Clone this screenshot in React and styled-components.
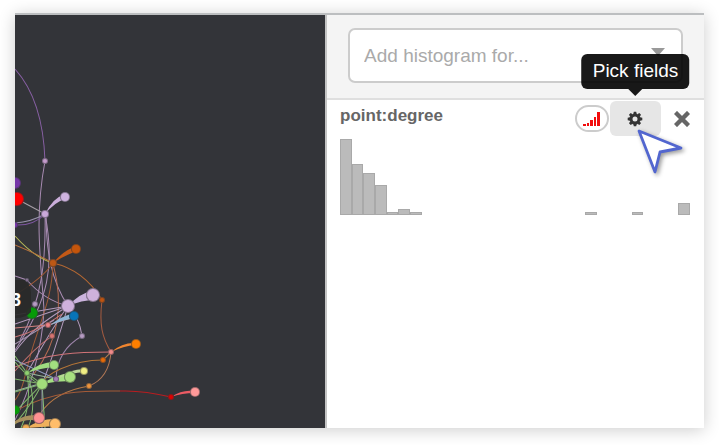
import React from "react";
import styled, { createGlobalStyle } from "styled-components";

const Global = createGlobalStyle`
  *, *::before, *::after { box-sizing: border-box; }
  body {
    margin: 0;
    background: #fff;
    font-family: "Liberation Sans", Arial, Helvetica, sans-serif;
  }
`;

const Page = styled.div`
  display: flex;
  min-height: 100vh;
  padding: 13px 15px 17px;
`;

const Frame = styled.main`
  flex: 1;
  display: grid;
  grid-template-columns: minmax(0, 45fr) minmax(0, 55fr);
  border-top: 2px solid #bcbec0;
  background: #fff;
  box-shadow: 0 2px 16px rgba(0, 0, 0, 0.2);
`;

const GraphPane = styled.section`
  display: flex;
  background: #333439;
`;

const GraphCanvas = styled.svg`
  display: block;
  flex: 1;
  min-width: 0;
  height: calc(100vh - 32px);
`;

const Sidebar = styled.aside`
  border-left: 2px solid #c4c4c4;
  background: #fff;
`;

const PickerBar = styled.header`
  padding: 13px 21px 15px;
  background: #f4f4f4;
  border-bottom: 2px solid #dfdfdf;
`;

const PickerField = styled.div`
  display: grid;
  align-items: center;
`;

const Picker = styled.select`
  grid-area: 1 / 1;
  appearance: none;
  width: 100%;
  height: 55px;
  padding: 0 44px 0 14px;
  border: 2px solid #ccc;
  border-radius: 7px;
  background: #fff;
  color: #aaa;
  font: 19px "Liberation Sans", Arial, sans-serif;
`;

const PickerArrow = styled.span`
  grid-area: 1 / 1;
  justify-self: end;
  margin: 0 18px 8px 0;
  border: 7px solid transparent;
  border-top: 8px solid #999;
  border-bottom: 0;
  pointer-events: none;
`;

const Histogram = styled.article`
  padding: 1px 0 0 13px;
`;

const TitleRow = styled.div`
  display: flex;
  align-items: center;
  height: 35px;
`;

const Title = styled.h2`
  flex: 1;
  margin: 0;
  padding-bottom: 6px;
  color: #666;
  font-size: 17px;
  line-height: 20px;
`;

const IconButton = styled.button`
  position: relative;
  display: flex;
  align-items: center;
  justify-content: center;
  width: ${(p) => p.$width}px;
  height: 35px;
  padding: 0;
  border: 0;
  border-radius: 6px;
  background: ${(p) => (p.$active ? "#e6e6e6" : "transparent")};
  color: #333;
`;

const EncodeButton = styled(IconButton)`
  height: 27px;
  margin-right: 1px;
  border: 2px solid #ccc;
  border-radius: 14px;
  background: #fff;
`;

const Tooltip = styled.span`
  position: absolute;
  bottom: calc(100% + 12px);
  left: 50%;
  transform: translateX(-50%);
  padding: 6px 11px 7px;
  border-radius: 6px;
  background: rgba(0, 0, 0, 0.9);
  color: #fff;
  font: 19px/22px "Liberation Sans", Arial, sans-serif;
  white-space: nowrap;

  &::after {
    content: "";
    position: absolute;
    top: 100%;
    left: 50%;
    margin-left: -7px;
    border: 7px solid transparent;
    border-top-color: rgba(0, 0, 0, 0.9);
    border-bottom: 0;
  }
`;

const Pointer = styled.svg`
  position: absolute;
  top: 24px;
  left: 24px;
  pointer-events: none;
  filter: drop-shadow(2px 2px 2px rgba(0, 0, 0, 0.4));
`;

const Bars = styled.div`
  display: grid;
  grid-template-columns: repeat(30, 1fr);
  align-items: end;
  height: 76px;
  margin: 3px 14px 0 0;
`;

const Bar = styled.span`
  height: ${(p) => p.$height}px;
  border: ${(p) => (p.$height ? 1 : 0)}px solid #a9a9a9;
  background: #bbb;
`;

const bins = Array.from({ length: 30 }, () => 0);
Object.assign(bins, { 0: 76, 1: 51, 2: 42, 3: 30, 4: 3, 5: 6, 6: 3, 21: 3, 25: 3, 29: 12 });

const edges = [
  ["#8860a4", "M15 69Q43 100 45 161"],
  ["#a98cb3", "M45 161C34 220 41 260 44 310C42 350 30 390 15 420"],
  ["#9a93ae", "M15 223Q31 222 45 214"],
  ["#7e57a0", "M15 225Q33 226 45 214"],
  ["#a7a0a7", "M17 199L45 214"],
  ["#a98cb3", "M45 214C46 260 42 300 20 340"],
  ["#a98cb3", "M45 214C55 265 49 300 15 350"],
  ["#a98cb3", "M46 214C46 250 51 280 68 306"],
  ["#a98cb3", "M15 276L27 280Q44 300 68 306"],
  ["#b7b957", "M15 236Q35 258 53 263"],
  ["#b7713d", "M15 245Q35 253 53 263"],
  ["#b56832", "M53 263Q84 270 102 300"],
  ["#9f5a36", "M53 263C45 275 28 287 15 295"],
  ["#9f5a36", "M53 263C52 293 45 310 35 340S24 390 15 400"],
  ["#b5694f", "M53 263C64 305 59 340 34 374"],
  ["#a45b40", "M102 300C99 325 102 337 111 352"],
  ["#b29abc", "M68 306L15 315"],
  ["#b29abc", "M68 306L15 324"],
  ["#b29abc", "M68 306C48 319 30 330 15 352"],
  ["#b29abc", "M68 306C54 325 40 350 27 373"],
  ["#b29abc", "M68 306C57 342 52 360 42 384"],
  ["#b29abc", "M68 306Q79 316 82 336"],
  ["#9d84aa", "M82 336Q57 350 56 379"],
  ["#d18080", "M15 328L48 325L74 317"],
  ["#ce7777", "M15 337Q40 330 62 314"],
  ["#c37070", "M52 336Q35 347 15 371"],
  ["#d07377", "M15 367C48 353 78 352 111 352"],
  ["#b17856", "M111 352Q109 378 89 386"],
  ["#b57637", "M103 360C70 360 44 375 42 384"],
  ["#b77946", "M89 386C64 390 49 400 40 414"],
  ["#a45b38", "M15 411C55 389 90 391 120 391"],
  ["#b91d20", "M120 391Q142 390 171 397"],
  ["#b57f54", "M103 360L111 352"],
  ["#80b66c", "M15 356L27 373L42 384L15 379"],
  ["#80b66c", "M15 362Q35 385 42 384"],
  ["#80b66c", "M15 392L42 384L15 412"],
  ["#80b66c", "M27 373Q32 404 21 428"],
  ["#80b66c", "M27 373Q38 404 28 428"],
  ["#8ac578", "M42 384L45 428"],
  ["#8e8fa4", "M42 384L42 428"],
  ["#98b69a", "M15 391L56 379L27 373"],
  ["#8f9bc0", "M15 360L56 379"],
  ["#80b66c", "M15 424Q32 404 42 384"],
  ["#a995b4", "M15 344L54 320"],
];

const wedges = [
  ["#cbaedb", "M45 214Q53 198 63 195L65 199Q55 202 45 214Z"],
  ["#c35917", "M53 263Q64 250 75 247L77 251Q63 256 53 263Z"],
  ["#cbb3dd", "M68 306Q80 293 92 291L94 300Q82 300 68 306Z"],
  ["#8fb6d6", "M50 325Q62 316 74 313L75 318Q64 320 50 325Z"],
  ["#9edb80", "M27 373Q40 362 54 362L54 367Q41 368 27 373Z"],
  ["#a5df83", "M42 384Q55 375 69 373L71 381Q56 381 42 384Z"],
  ["#bcd79a", "M56 379Q70 369 84 369L85 372Q70 373 56 379Z"],
  ["#f0852f", "M111 352Q123 342 136 343L136 345Q123 346 111 352Z"],
  ["#ec5b64", "M171 397Q183 389 194 391L195 393Q182 393 171 397Z"],
  ["#a8905e", "M15 421Q25 414 38 415L39 421Q27 418 15 424Z"],
  ["#f0b15c", "M26 428Q40 419 54 419L56 426Z"],
];

const nodes = [
  [45, 161, 2, "#c49bcc"], [15, 183, 5, "#7636a8"], [17, 199, 6, "#ff0000"],
  [45, 214, 3, "#c9a8d9"], [65, 197, 4, "#ceb3df"], [15, 225, 2, "#7636a8"],
  [53, 263, 3, "#bd5815"], [76, 249, 4, "#c5550b"], [27, 280, 1, "#8f7a9c"],
  [35, 304, 2, "#b69ac5"], [32, 313, 5, "#079b08"], [68, 306, 6, "#cfb1dc"],
  [93, 295, 6, "#cfb1dc"], [102, 300, 2, "#be5411"], [74, 316, 4, "#0874b8"],
  [48, 325, 2, "#ee8182"], [52, 336, 2, "#d77370"], [82, 336, 2, "#b59bc2"],
  [111, 352, 2, "#f18a8b"], [136, 344, 4, "#ff7f00"], [103, 360, 2, "#e76b08"],
  [54, 365, 4, "#a3df80"], [27, 373, 2, "#8fd16f"], [42, 384, 5, "#a2dd7b"],
  [56, 379, 2, "#a47db5"], [70, 377, 5, "#a8e080"], [84, 371, 3, "#f1ee83"],
  [89, 386, 2, "#ee943c"], [171, 397, 2, "#dd0000"], [195, 392, 4, "#ff9999"],
  [15, 410, 4, "#079b08"], [39, 418, 5, "#ff9292"], [55, 424, 5, "#ffbd6a"],
  [26, 428, 3, "#edac52"],
];

function Graph() {
  return (
    <GraphCanvas viewBox="15 15 310 413" preserveAspectRatio="xMinYMin slice" role="img" aria-label="Network graph">
      <g fill="none" strokeWidth="1">
        {edges.map(([color, d]) => <path key={d} d={d} stroke={color} />)}
      </g>
      {wedges.map(([color, d]) => <path key={d} d={d} fill={color} />)}
      {nodes.map(([x, y, r, color]) => (
        <g key={`${x}-${y}`} fill={color}>
          <circle cx={x} cy={y} r={r + 1} fill="#333439" />
          <circle cx={x} cy={y} r={r + 1} opacity=".55" />
          <circle cx={x} cy={y} r={r} />
        </g>
      ))}
      <path d="M15 280H24Q31 285 31 293V312Q26 318 15 318Z" fill="#292929" opacity=".92" />
      <text x="11" y="306" fill="#fff" fontSize="18" fontWeight="700">3</text>
    </GraphCanvas>
  );
}

function SignalIcon() {
  return (
    <svg width="18" height="16" viewBox="0 0 18 16" fill="#f20d0d" aria-hidden="true">
      <path d="M0 13h3v2H0zM4 12h2v3H4zM7 9h3v6H7zM11 6h2v9h-2zM14 1h3v14h-3z" />
    </svg>
  );
}

function CogIcon() {
  return (
    <svg width="16" height="16" viewBox="0 0 16 16" aria-hidden="true">
      <circle cx="8" cy="8" r="4" fill="none" stroke="#333" strokeWidth="3" />
      {[0, 45, 90, 135, 180, 225, 270, 315].map((angle) => (
        <path key={angle} d="M6.3 3L6.8 .7H9.2L9.7 3Z" fill="#333" transform={`rotate(${angle} 8 8)`} />
      ))}
    </svg>
  );
}

function CloseIcon() {
  return (
    <svg width="16" height="16" viewBox="0 0 16 16" aria-hidden="true">
      <path d="M3 3L13 13M13 3L3 13" stroke="#666" strokeWidth="4.4" strokeLinecap="square" />
    </svg>
  );
}

export default function App() {
  return (
    <>
      <Global />
      <Page>
        <Frame>
          <GraphPane><Graph /></GraphPane>
          <Sidebar>
            <PickerBar>
              <PickerField>
                <Picker aria-label="Add histogram" defaultValue="">
                  <option value="">Add histogram for...</option>
                  <option value="degree">point:degree</option>
                </Picker>
                <PickerArrow />
              </PickerField>
            </PickerBar>
            <Histogram>
              <TitleRow>
                <Title>point:degree</Title>
                <EncodeButton $width={34} aria-label="Color by field"><SignalIcon /></EncodeButton>
                <IconButton $width={51} $active aria-label="Pick fields">
                  <CogIcon />
                  <Tooltip role="tooltip">Pick fields</Tooltip>
                  <Pointer width="52" height="54" viewBox="0 0 52 54" aria-hidden="true">
                    <path
                      d="M5 6L47 23L26 27L21 47Z"
                      fill="#fff"
                      stroke="#5266cf"
                      strokeWidth="2.8"
                      strokeLinejoin="round"
                    />
                  </Pointer>
                </IconButton>
                <IconButton $width={43} aria-label="Remove histogram"><CloseIcon /></IconButton>
              </TitleRow>
              <Bars role="img" aria-label="Distribution of point:degree">
                {bins.map((height, i) => <Bar key={i} $height={height} />)}
              </Bars>
            </Histogram>
          </Sidebar>
        </Frame>
      </Page>
    </>
  );
}
